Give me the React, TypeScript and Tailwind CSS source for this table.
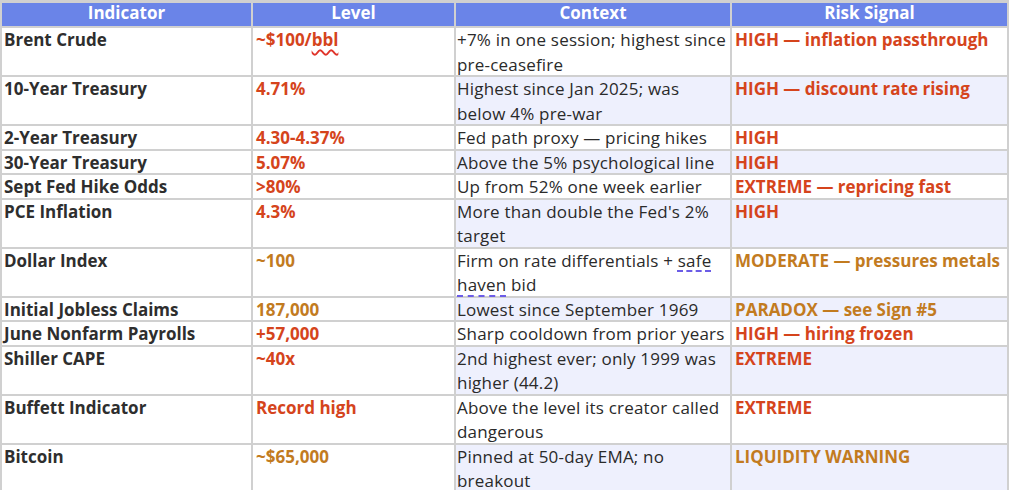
import React from "react";

type Tone = "red" | "amber";

type Row = {
  name: string;
  level: React.ReactNode;
  levelTone: Tone;
  context: React.ReactNode;
  risk: string;
  riskTone: Tone;
};

const toneClass: Record<Tone, string> = {
  red: "text-[#d5441c]",
  amber: "text-[#c27b1f]",
};

const rows: Row[] = [
  {
    name: "Brent Crude",
    level: (
      <>
        ~$100/
        <span className="underline decoration-wavy decoration-[#e0342a] decoration-[1.5px] underline-offset-[3px]">bbl</span>
      </>
    ),
    levelTone: "red",
    context: (
      <>
        +7% in one session; highest since
        <br />
        pre-ceasefire
      </>
    ),
    risk: "HIGH — inflation passthrough",
    riskTone: "red",
  },
  {
    name: "10-Year Treasury",
    level: "4.71%",
    levelTone: "red",
    context: (
      <>
        Highest since Jan 2025; was
        <br />
        below 4% pre-war
      </>
    ),
    risk: "HIGH — discount rate rising",
    riskTone: "red",
  },
  {
    name: "2-Year Treasury",
    level: "4.30-4.37%",
    levelTone: "red",
    context: "Fed path proxy — pricing hikes",
    risk: "HIGH",
    riskTone: "red",
  },
  {
    name: "30-Year Treasury",
    level: "5.07%",
    levelTone: "red",
    context: "Above the 5% psychological line",
    risk: "HIGH",
    riskTone: "red",
  },
  {
    name: "Sept Fed Hike Odds",
    level: ">80%",
    levelTone: "red",
    context: "Up from 52% one week earlier",
    risk: "EXTREME — repricing fast",
    riskTone: "red",
  },
  {
    name: "PCE Inflation",
    level: "4.3%",
    levelTone: "red",
    context: (
      <>
        More than double the Fed's 2%
        <br />
        target
      </>
    ),
    risk: "HIGH",
    riskTone: "red",
  },
  {
    name: "Dollar Index",
    level: "~100",
    levelTone: "amber",
    context: (
      <>
        Firm on rate differentials +{" "}
        <span className="underline decoration-dashed decoration-[#6b5ce6] decoration-2 underline-offset-[4px]">safe</span>
        <br />
        <span className="underline decoration-dashed decoration-[#6b5ce6] decoration-2 underline-offset-[4px]">haven</span> bid
      </>
    ),
    risk: "MODERATE — pressures metals",
    riskTone: "amber",
  },
  {
    name: "Initial Jobless Claims",
    level: "187,000",
    levelTone: "amber",
    context: "Lowest since September 1969",
    risk: "PARADOX — see Sign #5",
    riskTone: "amber",
  },
  {
    name: "June Nonfarm Payrolls",
    level: "+57,000",
    levelTone: "red",
    context: "Sharp cooldown from prior years",
    risk: "HIGH — hiring frozen",
    riskTone: "red",
  },
  {
    name: "Shiller CAPE",
    level: "~40x",
    levelTone: "red",
    context: (
      <>
        2nd highest ever; only 1999 was
        <br />
        higher (44.2)
      </>
    ),
    risk: "EXTREME",
    riskTone: "red",
  },
  {
    name: "Buffett Indicator",
    level: "Record high",
    levelTone: "red",
    context: (
      <>
        Above the level its creator called
        <br />
        dangerous
      </>
    ),
    risk: "EXTREME",
    riskTone: "red",
  },
  {
    name: "Bitcoin",
    level: "~$65,000",
    levelTone: "amber",
    context: (
      <>
        Pinned at 50-day EMA; no
        <br />
        breakout
      </>
    ),
    risk: "LIQUIDITY WARNING",
    riskTone: "amber",
  },
];

function Cell({
  className,
  children,
}: {
  className?: string;
  children: React.ReactNode;
}) {
  return (
    <div className={className}>
      <div className="leading-[24.5px] -mb-[2px] whitespace-nowrap">{children}</div>
    </div>
  );
}

export default function App() {
  return (
    <div className="w-[1010px] h-[490px] overflow-hidden bg-white font-['Open_Sans','Lato',sans-serif] text-[17px] text-[#2f2f2f]">
      <div className="w-[1009px] grid grid-cols-[249px_201px_274px_275px] gap-[2px] bg-[#d0d0d0] pt-[3px] px-[2px] pb-[2px]">
        {["Indicator", "Level", "Context", "Risk Signal"].map((h) => (
          <div
            key={h}
            className="h-[23px] bg-[#6a84e8] text-white font-bold text-center leading-[20px]"
          >
            {h}
          </div>
        ))}
        {rows.map((r, i) => {
          const shade = i % 2 === 1 ? "bg-[#eef0fd]" : "bg-white";
          return (
            <React.Fragment key={r.name}>
              <Cell className="bg-white pl-[2px] font-bold text-[#2e2e2e]">{r.name}</Cell>
              <Cell className={`bg-white pl-[3px] font-bold ${toneClass[r.levelTone]}`}>{r.level}</Cell>
              <Cell className={`${shade} pl-[1px] tracking-[0.2px] text-[#2a2a2a]`}>{r.context}</Cell>
              <Cell className={`${shade} pl-[3px] font-bold ${toneClass[r.riskTone]}`}>{r.risk}</Cell>
            </React.Fragment>
          );
        })}
      </div>
    </div>
  );
}
